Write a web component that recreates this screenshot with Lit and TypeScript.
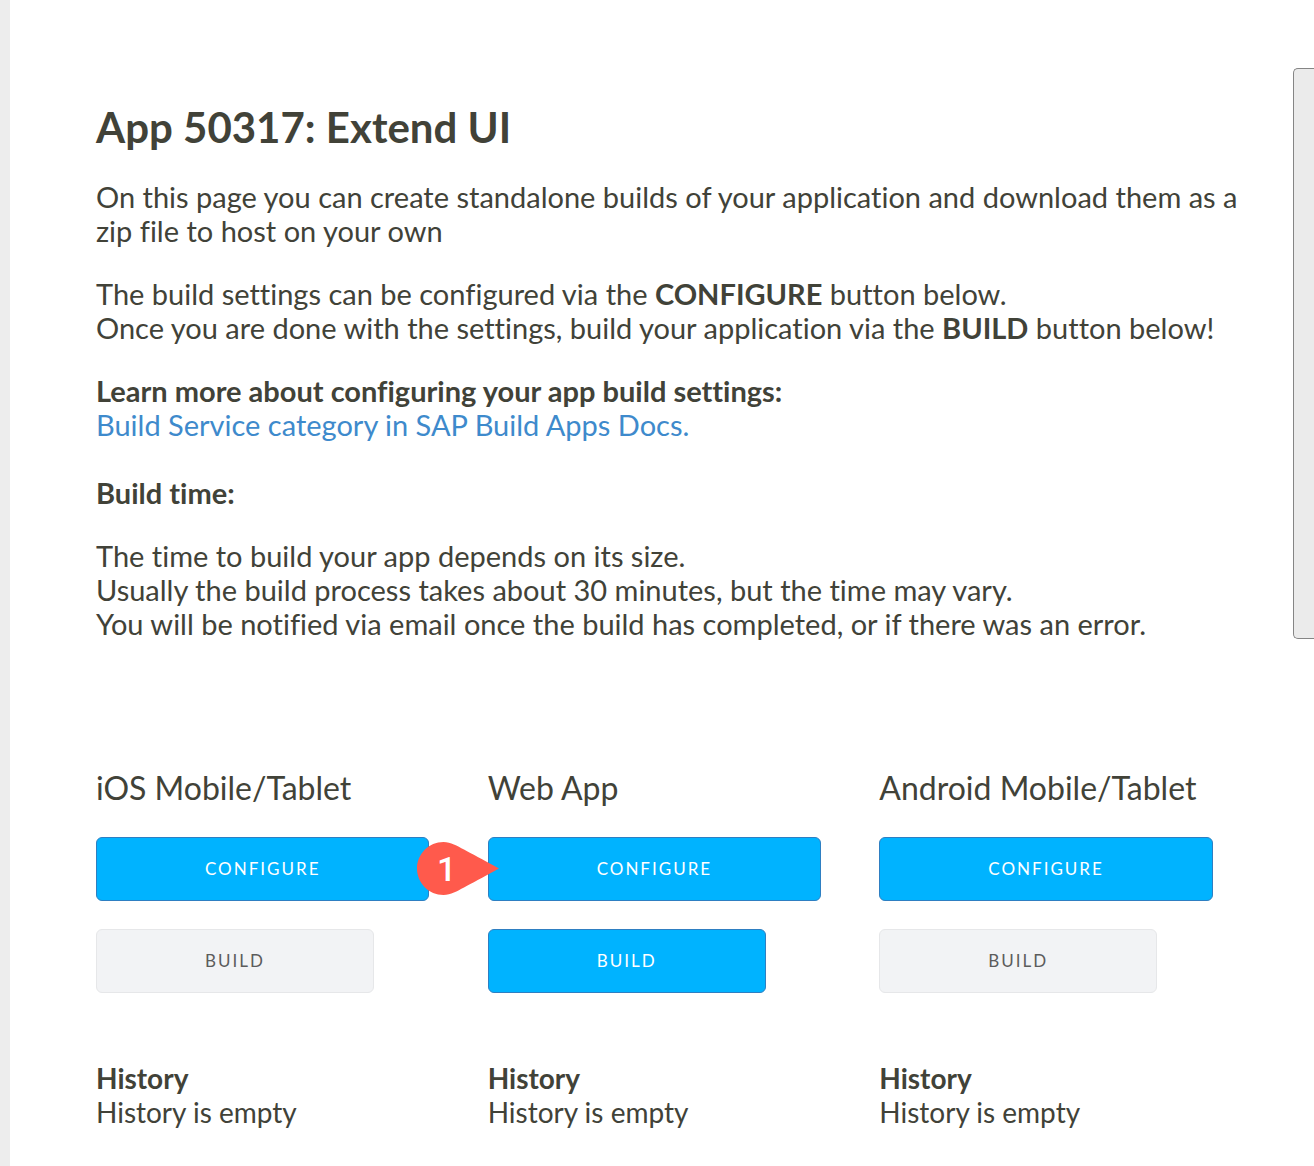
import { LitElement, html, css, nothing } from "lit";
import { customElement, property } from "lit/decorators.js";

@customElement("step-marker")
class StepMarker extends LitElement {
  @property({ type: Number }) step = 1;

  static styles = css`
    :host {
      display: block;
      width: 82px;
      height: 53px;
    }
    .frame {
      position: relative;
      width: 100%;
      height: 100%;
    }
    .shape {
      display: block;
    }
    .label {
      position: absolute;
      top: 0;
      left: 0;
      width: 60px;
      line-height: 54px;
      text-align: center;
      color: #fff;
      font-family: Roboto, sans-serif;
      font-size: 34px;
      font-weight: 500;
    }
  `;

  render() {
    return html`<div class="frame">
      <svg class="shape" width="82" height="53" viewBox="0 0 82 53" aria-hidden="true">
        <path
          fill="#ff5a4c"
          d="M26.5 0C11.9 0 0 11.9 0 26.5S11.9 53 26.5 53C34 53 40 49 47 45.500C55 41 64 36.500 82 26.500C64 16.500 55 12 47 7.500C40 4 34 0 26.500 0Z"
        />
      </svg>
      <span class="label">${this.step}</span>
    </div>`;
  }
}

@customElement("platform-card")
class PlatformCard extends LitElement {
  @property() name = "";
  @property({ type: Boolean }) buildable = false;
  @property({ type: Number }) step = 0;

  static styles = css`
    :host {
      display: block;
      min-width: 0;
    }
    .card {
      display: flex;
      flex-direction: column;
      align-items: flex-start;
    }
    .name {
      margin: 0 0 29px;
      font-size: 32px;
      line-height: 40px;
      font-weight: 400;
    }
    .action {
      position: relative;
      margin-bottom: 28px;
    }
    .marker {
      position: absolute;
      top: 5px;
      left: -71px;
    }
    .button {
      display: block;
      box-sizing: border-box;
      height: 64px;
      margin: 0;
      padding: 0 108px;
      border: 1px solid #2e7fc2;
      border-radius: 6px;
      background: #00b3ff;
      color: #fff;
      font-family: inherit;
      font-size: 17px;
      line-height: 24px;
      letter-spacing: 2px;
      text-transform: uppercase;
      cursor: pointer;
    }
    .button:disabled {
      border-color: #e6e7e9;
      background: #f2f3f5;
      color: #5c5c5c;
      cursor: default;
    }
    .history {
      margin: 40px 0 0;
      font-size: 28px;
      line-height: 34px;
      font-weight: 700;
    }
    .empty {
      margin: 0;
    }
  `;

  render() {
    return html`<section class="card">
      <h2 class="name">${this.name}</h2>
      <div class="action">
        <button class="button" type="button">Configure</button>
        ${this.step ? html`<step-marker class="marker" .step=${this.step}></step-marker>` : nothing}
      </div>
      <div class="action">
        <button class="button" type="button" ?disabled=${!this.buildable}>Build</button>
      </div>
      <h3 class="history">History</h3>
      <p class="empty">History is empty</p>
    </section>`;
  }
}

@customElement("app-root")
class AppRoot extends LitElement {
  static styles = css`
    :host {
      display: block;
    }
    .page {
      display: flex;
      box-sizing: border-box;
      min-height: 100vh;
      border-left: 10px solid #ededed;
      background: #fff;
      color: #414238;
      font-family: Lato, "Open Sans", sans-serif;
      font-size: 28px;
      line-height: 34px;
      font-variant-ligatures: none;
    }
    .content {
      flex: 1;
      min-width: 0;
      padding: 103px 22px 36px 86px;
    }
    .intro {
      padding-right: 24px;
      font-size: 29px;
    }
    .title {
      margin: 0 0 29px;
      font-size: 42px;
      line-height: 48px;
      font-weight: 700;
    }
    .text {
      margin: 0 0 29px;
    }
    .docs {
      margin-bottom: 34px;
    }
    .link {
      color: #3e8acc;
      text-decoration: none;
    }
    .platforms {
      display: grid;
      grid-template-columns: repeat(3, minmax(0, 1fr));
      margin-top: 127px;
    }
    .panel {
      box-sizing: border-box;
      width: 21px;
      height: 571px;
      margin-top: 68px;
      border: 1px solid #858585;
      border-right: 0;
      border-radius: 5px 0 0 5px;
      background: #ebebeb;
    }
  `;

  render() {
    return html`<div class="page">
      <main class="content">
        <div class="intro">
          <h1 class="title">App 50317: Extend UI</h1>
          <p class="text">
            On this page you can create standalone builds of your application and download them as a
            zip file to host on your own
          </p>
          <p class="text">
            The build settings can be configured via the <b>CONFIGURE</b> button below.<br />
            Once you are done with the settings, build your application via the <b>BUILD</b> button
            below!
          </p>
          <p class="text docs">
            <b>Learn more about configuring your app build settings:</b><br />
            <a class="link" href="#docs">Build Service category in SAP Build Apps Docs.</a>
          </p>
          <p class="text"><b>Build time:</b></p>
          <p class="text">
            The time to build your app depends on its size.<br />
            Usually the build process takes about 30 minutes, but the time may vary.<br />
            You will be notified via email once the build has completed, or if there was an error.
          </p>
        </div>
        <div class="platforms">
          <platform-card name="iOS Mobile/Tablet"></platform-card>
          <platform-card name="Web App" buildable step="1"></platform-card>
          <platform-card name="Android Mobile/Tablet"></platform-card>
        </div>
      </main>
      <aside class="panel"></aside>
    </div>`;
  }
}
